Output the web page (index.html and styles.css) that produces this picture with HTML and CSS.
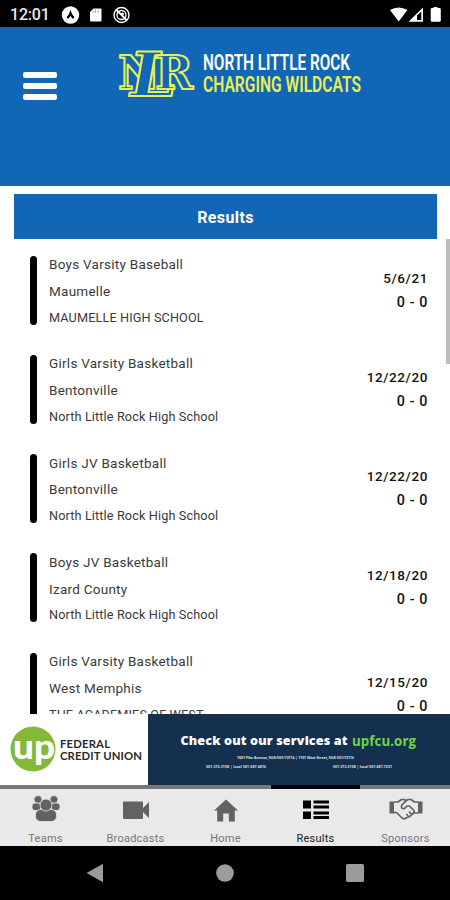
FILE: index.html
```html
<!DOCTYPE html>
<html lang="en">
<head>
    <title>Results</title>
    <meta charset="utf-8">
    <meta name="viewport" content="width=device-width, initial-scale=1.0">
    <link rel="stylesheet" href="styles.css">
</head>
<body>
    <!-- Status bar -->
    <div class="status">
        <span class="clock">12:01</span>
        <svg class="status-left" width="70" height="18" viewBox="0 0 70 18">
            <circle cx="9.5" cy="9" r="8.7" fill="#fff"/>
            <path d="M6.3 12Q8.3 10.5 9.5 7.2Q10.7 10.5 12.7 12" fill="none" stroke="#000" stroke-width="2.2"/>
            <path d="M32.5 2.5h7q1 0 1 1v11q0 1-1 1H30q-1 0-1-1V6z" fill="#fff"/>
            <path d="M32 4.5v2.5M34.5 3.5V7M37 3.5V7" stroke="#777" stroke-width=".6"/>
            <circle cx="60.5" cy="9" r="7.5" fill="none" stroke="#fff" stroke-width="1.4"/>
            <circle cx="60.5" cy="9" r="4.5" fill="none" stroke="#fff" stroke-width="1.3"/>
            <path d="M55.5 4l10 10" stroke="#fff" stroke-width="1.8"/>
            <circle cx="61.5" cy="8" r="1.5" fill="#fff"/>
        </svg>
        <svg class="status-right" width="52" height="18" viewBox="0 0 52 18">
            <path d="M0 4Q8.7-1.2 17.4 4L8.7 15.5z" fill="#fff"/>
            <path d="M18.5 15.8L33 1.5V15.8z" fill="#fff"/>
            <path d="M27 9.5L31.3 5.5V14H27z" fill="#000"/>
            <path d="M43.5 2V1h4v1h2q1.3 0 1.3 1.3v11.2q0 1.3-1.3 1.3h-7.5q-1.3 0-1.3-1.3V3.3Q40.7 2 42 2z" fill="#fff"/>
        </svg>
    </div>

    <header>
        <div class="menu">
            <span></span>
            <span></span>
            <span></span>
        </div>
        <svg class="logo" width="250" height="54" viewBox="115 46 250 54">
            <g class="monogram">
                <text x="118" y="89" font-size="46" textLength="42" lengthAdjust="spacingAndGlyphs">N</text>
                <text transform="translate(126 95.5) skewX(-10)" font-size="61" textLength="47" lengthAdjust="spacingAndGlyphs">L</text>
                <text x="155" y="89" font-size="46" textLength="38" lengthAdjust="spacingAndGlyphs">R</text>
            </g>
            <g class="team-name">
                <text x="203" y="70.3" fill="#fff" textLength="147" lengthAdjust="spacingAndGlyphs">NORTH LITTLE ROCK</text>
                <text x="203" y="92" fill="#e9ee55" textLength="158" lengthAdjust="spacingAndGlyphs">CHARGING WILDCATS</text>
            </g>
        </svg>
    </header>

    <main>
        <h1>Results</h1>
        <div class="list">
            <div class="game">
                <div class="info">
                    <p>Boys Varsity Baseball</p>
                    <p>Maumelle</p>
                    <p class="place">MAUMELLE HIGH SCHOOL</p>
                </div>
                <div class="score"><p class="date">5/6/21</p><p>0 - 0</p></div>
            </div>
            <div class="game">
                <div class="info">
                    <p>Girls Varsity Basketball</p>
                    <p>Bentonville</p>
                    <p class="place">North Little Rock High School</p>
                </div>
                <div class="score"><p class="date">12/22/20</p><p>0 - 0</p></div>
            </div>
            <div class="game">
                <div class="info">
                    <p>Girls JV Basketball</p>
                    <p>Bentonville</p>
                    <p class="place">North Little Rock High School</p>
                </div>
                <div class="score"><p class="date">12/22/20</p><p>0 - 0</p></div>
            </div>
            <div class="game">
                <div class="info">
                    <p>Boys JV Basketball</p>
                    <p>Izard County</p>
                    <p class="place">North Little Rock High School</p>
                </div>
                <div class="score"><p class="date">12/18/20</p><p>0 - 0</p></div>
            </div>
            <div class="game tall">
                <div class="info">
                    <p>Girls Varsity Basketball</p>
                    <p>West Memphis</p>
                    <p class="place">THE ACADEMIES OF WEST</p>
                </div>
                <div class="score"><p class="date">12/15/20</p><p>0 - 0</p></div>
            </div>
        </div>
        <div class="scrollbar"></div>
    </main>

    <!-- Sponsor banner -->
    <div class="banner">
        <svg width="148" height="71" viewBox="0 714 148 71">
            <circle cx="33" cy="749" r="22.5" fill="#84b83b"/>
            <text class="up" x="13" y="759" textLength="42" lengthAdjust="spacingAndGlyphs">up</text>
            <text class="union" x="60" y="747.5" textLength="50">FEDERAL</text>
            <text class="union" x="60" y="760" textLength="82">CREDIT UNION</text>
        </svg>
        <svg class="promo" width="302" height="71" viewBox="148 714 302 71">
            <text class="check" x="180.5" y="745" textLength="167">Check out our services at</text>
            <text class="check link" x="352" y="746" textLength="64">upfcu.org</text>
            <g class="fine">
                <text x="237" y="758.8" textLength="117">1001 Pike Avenue, NLR/501/72114  |  1101 West Street, NLR 501/72116</text>
                <text x="206" y="767.5" textLength="60">501.372.3158  |  local 501.687.6816</text>
                <text x="333" y="767.5" textLength="59">501.372.3158  |  local 501.687.7231</text>
            </g>
        </svg>
    </div>

    <div class="indicator"><span></span></div>

    <nav>
        <a class="tab">
            <svg width="30" height="30" viewBox="0 0 30 30">
                <g fill="#626262" stroke="#e9e9e9" stroke-width=".8">
                    <circle cx="7" cy="4.5" r="4"/>
                    <circle cx="23" cy="4.5" r="4"/>
                    <rect x="1" y="8" width="9" height="7.5" rx="3"/>
                    <rect x="20" y="8" width="9" height="7.5" rx="3"/>
                    <rect x="4.5" y="14.5" width="21" height="12" rx="5"/>
                    <circle cx="15" cy="10" r="6"/>
                </g>
            </svg>
            <span>Teams</span>
        </a>
        <a class="tab">
            <svg width="30" height="30" viewBox="0 0 30 30">
                <path d="M3 6.5H21q1 0 1 1V13l6-6V23l-6-6v6q0 1-1 1H3q-1 0-1-1V7.5q0-1 1-1z" fill="#626262"/>
            </svg>
            <span>Broadcasts</span>
        </a>
        <a class="tab">
            <svg width="30" height="30" viewBox="0 0 30 30">
                <path d="M15 4.5L27 15.5H23.8V26.5H17.8V18.5H12.2V26.5H6.2V15.5H3z" fill="#626262"/>
            </svg>
            <span>Home</span>
        </a>
        <a class="tab active">
            <svg width="30" height="30" viewBox="0 0 30 30">
                <path d="M2 5.5h8v8H2zM2 16.5h8v7.5H2zM12.5 5.5H28v3H12.5zM12.5 10.5H28v3H12.5zM12.5 16.5H28v3H12.5zM12.5 21H28v3H12.5z" fill="#000"/>
            </svg>
            <span>Results</span>
        </a>
        <a class="tab">
            <svg width="34" height="30" viewBox="0 0 34 30">
                <path d="M.5 6.5H5V18.5H.5zM29 6.5h4.5V18.5H29z" fill="#626262"/>
                <path d="M5 7H9L12.5 4.5H15L17 5.8L19 4.5H22L25.5 7H29M5 17.5H7.5L12 22Q14.5 25 17 23L19.5 22L22 20.5L24 18H29M17 5.8L12.5 10.5Q12 14.5 15.5 13.5L18 11H20.5L25 15.5Q25.5 18 23 19.5M20 16.5l2 2.5M17.5 19l1.500 2" fill="none" stroke="#626262" stroke-width="1.7" stroke-linejoin="round"/>
            </svg>
            <span>Sponsors</span>
        </a>
    </nav>

    <!-- Android navigation -->
    <div class="system">
        <svg width="18" height="20" viewBox="0 0 18 20"><path d="M.5 10L17 .8V19.2z"/></svg>
        <svg width="18" height="20" viewBox="0 0 18 20"><circle cx="9" cy="10" r="8.8"/></svg>
        <svg width="18" height="20" viewBox="0 0 18 20"><rect y="1" width="18" height="18" rx="1.5"/></svg>
    </div>
</body>
</html>
```

FILE: styles.css
```css
/* General styles */
body {
    font-family: Roboto, 'Liberation Sans', sans-serif;
    margin: 0;
    width: 450px;
    height: 900px;
    display: flex;
    flex-direction: column;
    overflow: hidden;
    background: #fff;
}

p, h1 {
    margin: 0;
}

svg {
    display: block;
    flex: none;
}

/* Status bar */
.status {
    height: 27px;
    flex: none;
    box-sizing: border-box;
    display: flex;
    align-items: center;
    padding: 2px 8px 0 10px;
    background: #000;
    color: #e8e8e8;
}

.clock {
    width: 51px;
    font-size: 16px;
    font-weight: 500;
    letter-spacing: -0.2px;
}

.status-right {
    margin-left: auto;
}

/* Header styles */
header {
    height: 159px;
    flex: none;
    box-sizing: border-box;
    display: flex;
    align-items: flex-start;
    padding: 19px 0 0 23px;
    background: #1266b6;
}

.menu {
    display: flex;
    flex-direction: column;
    gap: 5px;
    width: 34px;
    padding-top: 26px;
    margin-right: 58px;
}

.menu span {
    height: 6px;
    border-radius: 2px;
    background: #fff;
}

.logo {
    overflow: visible;
}

.monogram {
    font-family: 'DejaVu Serif', serif;
    font-weight: bold;
    fill: #1266b6;
    stroke: #e9ee55;
    stroke-width: 2;
    stroke-linejoin: round;
}

.team-name {
    font-family: Roboto, sans-serif;
    font-size: 22px;
    font-weight: 600;
}

/* Results list */
main {
    position: relative;
    flex: none;
    height: 528px;
    overflow: hidden;
}

h1 {
    height: 45px;
    margin: 8px 13px 0 14px;
    line-height: 47px;
    text-align: center;
    font-size: 16px;
    font-weight: 700;
    letter-spacing: 0.4px;
    color: #fff;
    background: #1266b6;
}

.list {
    display: flex;
    flex-direction: column;
    gap: 30.3px;
    padding: 16.5px 22px 0 30px;
}

.game {
    height: 69px;
    flex: none;
    display: flex;
    align-items: center;
    justify-content: space-between;
}

.tall {
    height: 84px;
}

.info {
    height: 100%;
    box-sizing: border-box;
    position: relative;
    padding-left: 19px;
    font-size: 13.5px;
    line-height: 26.8px;
    letter-spacing: 0.26px;
    color: #3a3a3a;
}

/* Rounded marker at the left of a game */
.info::before {
    content: "";
    position: absolute;
    left: 0;
    top: 0;
    bottom: 0;
    width: 7px;
    border-radius: 4px;
    background: #000;
}

.info p {
    margin-top: -4.6px;
    margin-bottom: 4.6px;
    white-space: nowrap;
}

.info .place {
    font-size: 12.7px;
    letter-spacing: 0.12px;
}

.score {
    padding-bottom: 1px;
    text-align: right;
    font-size: 14.3px;
    font-weight: 500;
    line-height: 24px;
    letter-spacing: 0.6px;
    color: #111;
}

.score .date {
    font-size: 13.5px;
}

.scrollbar {
    position: absolute;
    right: 0;
    top: 53px;
    width: 4px;
    height: 125px;
    background: #bdbdbd;
}

/* Sponsor banner */
.banner {
    display: flex;
    flex: none;
    height: 70.5px;
    overflow: hidden;
}

.promo {
    background: #15304e;
}

.up {
    font-family: Lato, sans-serif;
    font-size: 35px;
    font-weight: 900;
    fill: #fff;
}

.union {
    font-family: Lato, sans-serif;
    font-size: 11.3px;
    font-weight: 700;
    fill: #2b2b2b;
}

.check {
    font-family: 'Open Sans', sans-serif;
    font-size: 12.6px;
    font-weight: 800;
    fill: #fff;
}

.link {
    font-size: 13.3px;
    font-weight: 700;
    fill: #6cd544;
}

.fine {
    font-family: 'Open Sans', sans-serif;
    font-size: 3.5px;
    font-weight: 700;
    fill: #dfe5ec;
}

/* Tabs */
.indicator {
    height: 4.5px;
    flex: none;
    background: #777;
}

.indicator span {
    display: block;
    width: 89px;
    height: 4px;
    margin-left: 271px;
    background: #00020c;
}

nav {
    display: flex;
    flex: none;
    height: 57px;
    background: #e9e9e9;
}

.tab {
    flex: 1;
    display: flex;
    flex-direction: column;
    align-items: center;
    padding: 6px 0 0 1px;
    font-size: 11px;
    letter-spacing: 0.25px;
    color: #777;
}

.tab span {
    margin-top: 7px;
    line-height: 13px;
}

.active {
    color: #222;
}

/* Android navigation */
.system {
    flex: 1;
    display: flex;
    justify-content: space-between;
    align-items: center;
    padding: 0 86px;
    background: #000;
    fill: #9b9b9b;
}
```
